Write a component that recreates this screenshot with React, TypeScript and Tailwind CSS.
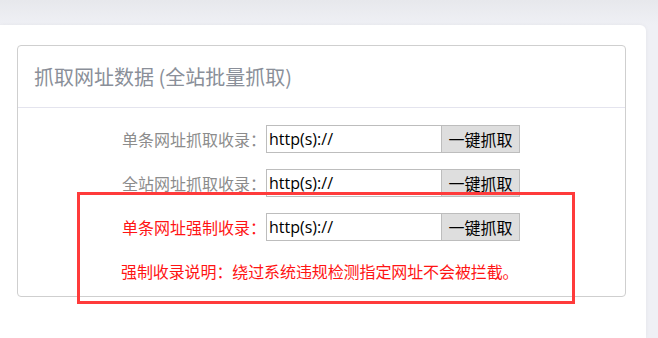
const rows = [
  { label: "单条网址抓取收录：", red: false },
  { label: "全站网址抓取收录：", red: false },
  { label: "单条网址强制收录：", red: true },
];

const cjk = { fontFamily: '"Noto Sans CJK SC", "Noto Sans", sans-serif' };

function FetchRow({ label, red }: { label: string; red: boolean }) {
  return (
    <div className="flex items-center h-[28px]">
      <label
        className={`w-[248px] shrink-0 text-right text-[16px] ${red ? "text-[#ff1414]" : "text-[#8c8c8c]"}`}
      >
        {label}
      </label>
      <input
        readOnly
        defaultValue="http(s)://"
        className="w-[176px] h-[28px] border border-[#bdbdbd] bg-white px-[2px] text-[16px] text-black outline-none"
        style={{ fontFamily: '"Open Sans", "Noto Sans", sans-serif' }}
      />
      <button className="w-[78px] h-[28px] border border-l-0 border-[#bdbdbd] bg-[#dedede] text-[16px] text-black">
        一键抓取
      </button>
    </div>
  );
}

export default function App() {
  return (
    <div
      className="relative w-[658px] h-[338px] overflow-hidden bg-gradient-to-b from-[#e7e8ec] to-[#eff0f5] to-[25px] pt-[25px] pr-[12px]"
      style={cjk}
    >
      <div className="h-[313px] bg-white rounded-tr-[6px] shadow-[0_0_4px_rgba(0,0,0,0.05)] pl-[17px] pt-[20px]">
        <div className="w-[609px] h-[252px] border border-[#cfcfcf] rounded-[4px]">
          <div className="h-[62px] border-b border-[#e4e4ee] pl-[16px] flex items-center">
            <h3 className="text-[20px] text-[#8a8f99] font-normal">
              抓取网址数据 (全站批量抓取)
            </h3>
          </div>
          <div className="pt-[17px] flex flex-col gap-[16px]">
            {rows.map((r) => (
              <FetchRow key={r.label} label={r.label} red={r.red} />
            ))}
            <p className="ml-[103px] mt-[2px] text-[16px] tracking-[-0.1px] text-[#ff1414]">
              强制收录说明：绕过系统违规检测指定网址不会被拦截。
            </p>
          </div>
        </div>
      </div>
      <div className="absolute left-[77px] top-[192px] w-[498px] h-[112px] border-[3px] border-[#ff3b3b] pointer-events-none" />
    </div>
  );
}
